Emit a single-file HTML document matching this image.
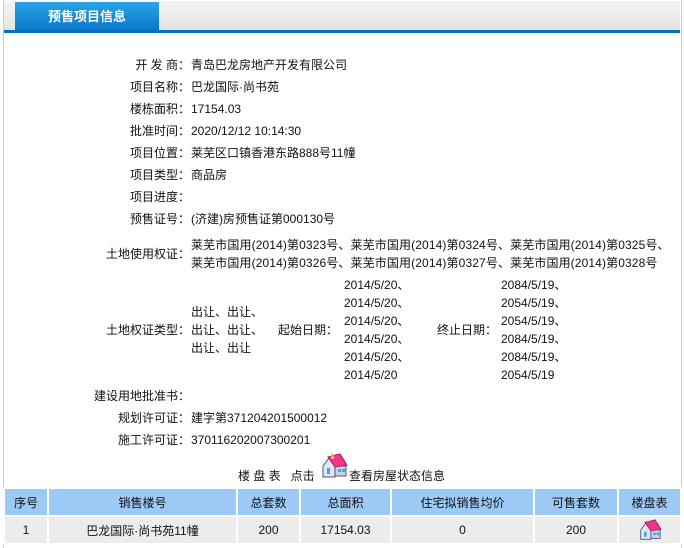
<!DOCTYPE html>
<html><head><meta charset="utf-8"><style>
body{margin:0;width:684px;height:548px;background:#fff;font-family:"Liberation Sans","Noto Sans CJK SC",sans-serif;font-size:12px;color:#111;position:relative;overflow:hidden}
.a{position:absolute;white-space:nowrap;line-height:18px}
.l{position:absolute;right:494px;text-align:right;white-space:nowrap;line-height:18px}
.v{position:absolute;left:191px;white-space:nowrap;line-height:18px}
table{position:absolute;left:3px;top:487px;border-collapse:collapse;width:679px;table-layout:fixed}
td{border:2px solid #fff;text-align:center;height:26px;padding:0}
tr.h td{background:#9dc9f7}
tr.r td{background:#ececec}
</style></head><body>
<div style="position:absolute;left:3px;top:0;width:1px;height:548px;background:#ccc"></div>
<div style="position:absolute;left:681px;top:0;width:1px;height:548px;background:#ccc"></div>
<div style="position:absolute;left:4px;top:1px;width:676px;height:29px;background:linear-gradient(#f3f3f3,#e4e4e4)"></div>
<div style="position:absolute;left:4px;top:30px;width:676px;height:3px;background:#0070c4"></div>
<div style="position:absolute;left:15px;top:2px;width:144px;height:28px;background:linear-gradient(#2aa4e6,#0a78c8);color:#fff;font-weight:bold;font-size:13px;line-height:30px;text-align:center">预售项目信息</div>

<div class="l" style="top:56px">开 发 商：</div><div class="v" style="top:56px">青岛巴龙房地产开发有限公司</div>
<div class="l" style="top:78px">项目名称：</div><div class="v" style="top:78px">巴龙国际·尚书苑</div>
<div class="l" style="top:100px">楼栋面积：</div><div class="v" style="top:100px">17154.03</div>
<div class="l" style="top:122px">批准时间：</div><div class="v" style="top:122px">2020/12/12 10:14:30</div>
<div class="l" style="top:144px">项目位置：</div><div class="v" style="top:144px">莱芜区口镇香港东路888号11幢</div>
<div class="l" style="top:166px">项目类型：</div><div class="v" style="top:166px">商品房</div>
<div class="l" style="top:188px">项目进度：</div>
<div class="l" style="top:210px">预售证号：</div><div class="v" style="top:210px">(济建)房预售证第000130号</div>
<div class="l" style="top:245px">土地使用权证：</div>
<div class="v" style="top:236px;letter-spacing:0.12px">莱芜市国用(2014)第0323号、莱芜市国用(2014)第0324号、莱芜市国用(2014)第0325号、<br>莱芜市国用(2014)第0326号、莱芜市国用(2014)第0327号、莱芜市国用(2014)第0328号</div>
<div class="l" style="top:321px">土地权证类型：</div>
<div class="v" style="top:303px">出让、出让、<br>出让、出让、<br>出让、出让</div>
<div class="a" style="left:278px;top:321px">起始日期：</div>
<div class="a" style="left:344px;top:276px">2014/5/20、<br>2014/5/20、<br>2014/5/20、<br>2014/5/20、<br>2014/5/20、<br>2014/5/20</div>
<div class="a" style="left:437px;top:321px">终止日期：</div>
<div class="a" style="left:501px;top:276px">2084/5/19、<br>2054/5/19、<br>2054/5/19、<br>2084/5/19、<br>2084/5/19、<br>2054/5/19</div>
<div class="l" style="top:387px">建设用地批准书：</div>
<div class="l" style="top:409px">规划许可证：</div><div class="v" style="top:409px">建字第371204201500012</div>
<div class="l" style="top:431px">施工许可证：</div><div class="v" style="top:431px">370116202007300201</div>

<div class="a" style="left:238px;top:467px">楼 盘 表 &nbsp; 点击</div>
<svg style="position:absolute;left:320px;top:453px" width="28" height="26" viewBox="0 0 28 26">
<path d="M3 13 L9 5 L15 13 V24 H3Z" fill="#dde6f2" stroke="#556" stroke-width="1"/>
<path d="M15 13 H26 V23 H15Z" fill="#c8d4e6" stroke="#556" stroke-width="1"/>
<path d="M8 4 L20 1 L27 12 L15 14Z" fill="#f0358a" stroke="#a02060" stroke-width="1"/>
<rect x="11" y="1" width="3" height="5" fill="#e8b070"/>
<rect x="7" y="15" width="3" height="6" fill="#4aa0e0"/>
<rect x="18" y="16" width="3" height="3" fill="#4aa0e0"/><rect x="22" y="16" width="3" height="3" fill="#4aa0e0"/>
</svg>
<div class="a" style="left:349px;top:467px">查看房屋状态信息</div>

<table>
<colgroup><col style="width:44px"><col style="width:189px"><col style="width:63px"><col style="width:91px"><col style="width:143px"><col style="width:84px"><col></colgroup>
<tr class="h"><td>序号</td><td>销售楼号</td><td>总套数</td><td>总面积</td><td>住宅拟销售均价</td><td>可售套数</td><td>楼盘表</td></tr>
<tr class="r"><td>1</td><td>巴龙国际·尚书苑11幢</td><td>200</td><td>17154.03</td><td>0</td><td>200</td><td>
<svg width="26" height="22" viewBox="0 0 28 26" style="vertical-align:middle">
<path d="M3 13 L9 5 L15 13 V24 H3Z" fill="#dde6f2" stroke="#556" stroke-width="1"/>
<path d="M15 13 H26 V23 H15Z" fill="#c8d4e6" stroke="#556" stroke-width="1"/>
<path d="M8 4 L20 1 L27 12 L15 14Z" fill="#f0358a" stroke="#a02060" stroke-width="1"/>
<rect x="7" y="15" width="3" height="6" fill="#4aa0e0"/>
<rect x="18" y="16" width="3" height="3" fill="#4aa0e0"/><rect x="22" y="16" width="3" height="3" fill="#4aa0e0"/>
</svg></td></tr>
</table>
</body></html>
